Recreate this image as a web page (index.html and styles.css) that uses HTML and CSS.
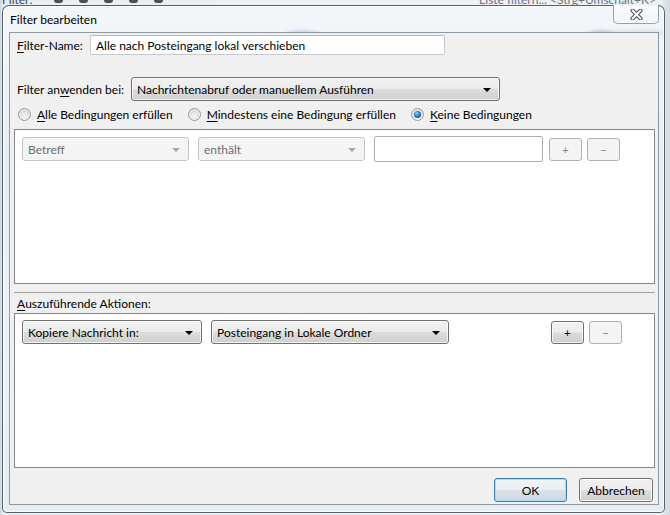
FILE: index.html
```html
<!DOCTYPE html>
<html>

<head>
    <title>Filter bearbeiten</title>
    <link rel="stylesheet" href="styles.css">
</head>

<body>
    <!-- toolbar of the mail window sitting behind the dialog -->
    <div class="app-strip">
        <span class="app-label">Filter:</span>
        <span class="app-icons"><i></i><i></i><i></i><i></i><i></i></span>
        <span class="app-search">Liste filtern... &lt;Strg+Umschalt+K&gt;</span>
    </div>

    <div class="window">
        <div class="titlebar">
            <span class="title">Filter bearbeiten</span>
            <div class="close">
                <svg width="13" height="11" viewBox="0 0 13 11">
                    <path d="M2.5 1.5 L10.5 9.5 M10.5 1.5 L2.5 9.5" stroke="#4a4f55" stroke-width="4" stroke-linecap="round" />
                    <path d="M2.5 1.5 L10.5 9.5 M10.5 1.5 L2.5 9.5" stroke="#ffffff" stroke-width="2" stroke-linecap="round" />
                </svg>
            </div>
        </div>

        <div class="client">
            <div class="row name-row">
                <span class="label name-label"><u>F</u>ilter-Name:</span>
                <div class="textbox name">Alle nach Posteingang lokal verschieben</div>
            </div>

            <div class="row apply-row">
                <span class="label apply-label">Filter an<u>w</u>enden bei:</span>
                <div class="dropdown apply">Nachrichtenabruf oder manuellem Ausführen<span class="arrow"></span></div>
            </div>

            <div class="row radios">
                <span class="radio"><span class="dot"></span><span><u>A</u>lle Bedingungen erfüllen</span></span>
                <span class="radio"><span class="dot"></span><span><u>M</u>indestens eine Bedingung erfüllen</span></span>
                <span class="radio checked"><span class="dot"></span><span><u>K</u>eine Bedingungen</span></span>
            </div>

            <div class="listbox conditions">
                <div class="rule">
                    <div class="dropdown disabled cond">Betreff<span class="arrow"></span></div>
                    <div class="dropdown disabled cond">enthält<span class="arrow"></span></div>
                    <div class="textbox value"></div>
                    <div class="btn small disabled">+</div>
                    <div class="btn small disabled">&minus;</div>
                </div>
            </div>

            <div class="splitter"></div>
            <div class="section-label"><u>A</u>uszuführende Aktionen:</div>

            <div class="listbox actions">
                <div class="rule">
                    <div class="dropdown action-type">Kopiere Nachricht in:<span class="arrow"></span></div>
                    <div class="dropdown folder">Posteingang in Lokale Ordner<span class="arrow"></span></div>
                    <div class="btn small add">+</div>
                    <div class="btn small disabled">&minus;</div>
                </div>
            </div>

            <div class="dialog-buttons">
                <div class="btn push default">OK</div>
                <div class="btn push">Abbrechen</div>
            </div>
        </div>
    </div>
</body>

</html>
```

FILE: styles.css
```css
* {
    box-sizing: border-box;
}

body {
    margin: 0;
    width: 670px;
    height: 515px;
    overflow: hidden;
    background: linear-gradient(90deg, #c9d6e3 0, #e9eef3 3px, #eef2f6 660px, #d7dee6 667px);
    font-family: Lato, "Open Sans", sans-serif;
    font-size: 12px;
    color: #000;
}

u {
    text-decoration: underline;
    text-underline-offset: 2px;
}

/* mail window behind */
.app-strip {
    height: 5px;
    overflow: hidden;
    display: flex;
    color: #3a4450;
    white-space: nowrap;
}

.app-strip > span {
    display: block;
    height: 5px;
    line-height: 0;
    overflow: hidden;
}

.app-label {
    margin-left: 2px;
}

.app-icons {
    display: flex !important;
    gap: 16px;
    margin-left: 22px;
}

.app-icons i {
    display: block;
    width: 9px;
    height: 3px;
    border-radius: 0 0 3px 3px;
    background: #4a5058;
}

.app-search {
    margin-left: auto;
    margin-right: 14px;
    color: #6a737c;
}

/* dialog window */
.window {
    margin-left: 2px;
    width: 663px;
    height: 508px;
    border: 1px solid rgba(40, 48, 58, 0.75);
    border-radius: 7px 7px 5px 5px;
    background:
        radial-gradient(ellipse 22px 5px at 300px 27px, rgba(90, 140, 200, 0.35), transparent),
        radial-gradient(ellipse 18px 5px at 598px 27px, rgba(80, 110, 150, 0.35), transparent),
        radial-gradient(ellipse 50px 6px at 640px 27px, rgba(120, 160, 200, 0.25), transparent),
        linear-gradient(180deg, #f3f6f9 0%, #e9eef3 30%, #edf2f6 70%, #e6edf3 100%);
    box-shadow: inset 0 0 0 1px rgba(255, 255, 255, 0.85);
    padding: 0 5px 7px 6px;
    display: flex;
    flex-direction: column;
}

.titlebar {
    height: 26px;
    display: flex;
    justify-content: space-between;
    align-items: center;
}

.title {
    padding-left: 1px;
    color: #000;
}

.close {
    align-self: flex-start;
    margin-top: -1px;
    width: 46px;
    height: 19px;
    border: 1px solid rgba(70, 80, 95, 0.55);
    border-top: none;
    border-radius: 0 0 5px 5px;
    background: linear-gradient(180deg, rgba(255, 255, 255, 0.75), rgba(235, 240, 245, 0.6));
    box-shadow: inset 0 0 0 1px rgba(255, 255, 255, 0.7);
    display: flex;
    align-items: center;
    justify-content: center;
}

.client {
    flex: 1;
    border: 1px solid #8e99a4;
    background: #f0f0f0;
    display: flex;
    flex-direction: column;
    padding: 0 3px 0 4px;
}

.row {
    display: flex;
    align-items: center;
}

.label {
    padding-left: 3px;
    white-space: nowrap;
}

.name-label {
    width: 76px;
}

.apply-label {
    width: 117px;
}

.name-row {
    margin-top: 2px;
}

.textbox {
    background: #fff;
    border: 1px solid #c7c9cc;
    border-top-color: #b5b8bc;
    border-radius: 2px;
    display: flex;
    align-items: center;
    padding-left: 5px;
}

.textbox.name {
    width: 355px;
    height: 20px;
}

.apply-row {
    margin-top: 22px;
}

/* combo boxes */
.dropdown {
    position: relative;
    height: 24px;
    display: flex;
    align-items: center;
    padding-left: 5px;
    border: 1px solid #707070;
    border-radius: 3px;
    background: linear-gradient(180deg, #f2f2f2 0%, #ebebeb 48%, #dddddd 52%, #cfcfcf 100%);
    box-shadow: inset 0 0 0 1px rgba(255, 255, 255, 0.75);
    white-space: nowrap;
}

.dropdown .arrow {
    position: absolute;
    right: 8px;
    top: 10px;
    border-left: 4px solid transparent;
    border-right: 4px solid transparent;
    border-top: 4px solid #000;
}

.dropdown.disabled {
    border-color: #c3c6c9;
    background: #f4f4f4;
    box-shadow: none;
    color: #6d6d6d;
}

.dropdown.disabled .arrow {
    border-top-color: #a6a6a6;
}

.dropdown.apply {
    width: 369px;
}

.radios {
    margin-top: 4px;
    height: 18px;
    padding-left: 4px;
    gap: 15px;
}

.radio {
    display: flex;
    align-items: center;
    gap: 6px;
    white-space: nowrap;
}

.radio .dot {
    width: 13px;
    height: 13px;
    border-radius: 50%;
    border: 1px solid #97999c;
    background: radial-gradient(circle at 50% 65%, #f6f6f6 0, #dcdcdc 55%, #c9cacc 100%);
    box-shadow: inset 0 0 0 1px rgba(255, 255, 255, 0.6);
    display: flex;
    align-items: center;
    justify-content: center;
}

.radio.checked .dot::after {
    content: "";
    width: 7px;
    height: 7px;
    border-radius: 50%;
    background: radial-gradient(circle at 40% 35%, #8cd0f5 0, #2d7ebf 45%, #0d3f6e 100%);
}

/* condition / action lists */
.listbox {
    height: 155px;
    border: 1px solid #828790;
    background: #fff;
    padding: 6px 0 0 7px;
    flex-shrink: 0;
}

.listbox.conditions {
    margin-top: 6px;
}

.rule {
    display: flex;
    align-items: center;
}

.dropdown.cond {
    width: 167px;
    margin-right: 9px;
}

.textbox.value {
    width: 169px;
    height: 26px;
    border-color: #abadb3;
    margin-right: 6px;
}

.btn {
    display: flex;
    align-items: center;
    justify-content: center;
    border: 1px solid #707070;
    border-radius: 3px;
    background: linear-gradient(180deg, #f2f2f2 0%, #ebebeb 48%, #dddddd 52%, #cfcfcf 100%);
    box-shadow: inset 0 0 0 1px rgba(255, 255, 255, 0.75);
}

.btn.small {
    width: 33px;
    height: 23px;
    margin-right: 5px;
    font-size: 11px;
}

.btn.disabled {
    border-color: #adb2b5;
    background: #f4f4f4;
    box-shadow: none;
    color: #838383;
}

.dropdown.action-type {
    width: 180px;
    margin-right: 9px;
}

.dropdown.folder {
    width: 238px;
}

.btn.add {
    margin-left: 102px;
}

.splitter {
    margin-top: 8px;
    height: 1px;
    background: #a0a0a0;
    flex-shrink: 0;
}

.section-label {
    height: 20px;
    padding-left: 3px;
    display: flex;
    align-items: center;
}

.dialog-buttons {
    margin-top: 10px;
    display: flex;
    justify-content: flex-end;
    gap: 12px;
    padding-right: 2px;
}

.btn.push {
    width: 74px;
    height: 24px;
}

.btn.default {
    width: 73px;
    border-color: #3c7fb1;
    box-shadow: inset 0 0 0 1px #a8dcf6;
    background: linear-gradient(180deg, #f1f5f8 0%, #e8eef3 48%, #dae2e9 52%, #cdd7e0 100%);
}
```
